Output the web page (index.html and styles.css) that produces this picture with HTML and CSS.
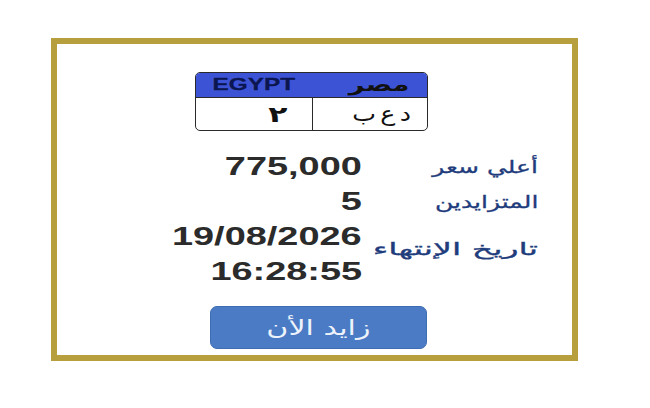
FILE: index.html
```html
<!DOCTYPE html>
<html lang="ar">
<head>
<meta charset="utf-8">
<link rel="stylesheet" href="styles.css">
</head>
<body>
<div class="card">
  <div class="plate">
    <div class="plate-head">
      <span class="cell egypt"><span class="sx">EGYPT</span></span>
      <span class="cell masr"><span class="sx">مصر</span></span>
    </div>
    <div class="plate-body">
      <span class="cell num"><span class="sx">٢</span></span>
      <span class="cell letters"><span class="sx">د ع ب</span></span>
    </div>
  </div>
  <div class="info">
    <div class="val"><span class="sx">775,000</span></div>
    <div class="lbl"><span class="sx">أعلي سعر</span></div>
    <div class="val"><span class="sx">5</span></div>
    <div class="lbl"><span class="sx">المتزايدين</span></div>
    <div class="val"><span class="sx">19/08/2026</span><br><span class="sx">16:28:55</span></div>
    <div class="lbl lbl-end"><span class="sx wide">تاريخ الإنتهاء</span></div>
  </div>
  <div class="btn"><span class="sx">زايد الأن</span></div>
</div>
</body>
</html>
```
FILE: styles.css
```css
html, body { margin: 0; padding: 0; background: #ffffff; }
body { padding: 38px 0 0 51px; font-family: "Liberation Sans", Arial, sans-serif; }

.card {
  width: 515px;
  height: 283px;
  border: 6px solid #b79f3d;
  display: flex;
  flex-direction: column;
  align-items: flex-start;
  padding-top: 28px;
  box-sizing: content-box;
}

.sx { display: inline-block; transform: scaleX(1.43); transform-origin: center; white-space: nowrap; }

.plate {
  margin-left: 138px;
  width: 231px;
  height: 57px;
  border: 1.5px solid #2a2a2a;
  border-radius: 5px;
  overflow: hidden;
  display: flex;
  flex-direction: column;
}
.plate-head {
  height: 24px;
  background: #3d53d6;
  border-bottom: 1px solid #2a2a2a;
  display: flex;
}
.plate-body { flex: 1; display: flex; }
.cell {
  width: 50%;
  min-width: 0;
  box-sizing: border-box;
  display: flex;
  align-items: center;
  justify-content: center;
}
.plate-body .cell + .cell { border-left: 1.5px solid #2a2a2a; }
.egypt { font-weight: bold; font-size: 17px; color: #0b1650; -webkit-text-stroke: 0.3px #0b1650; }
.masr { font-family: "DejaVu Sans", sans-serif; font-size: 19px; color: #111; font-weight: bold; justify-content: flex-end; padding-right: 18px; padding-bottom: 2px; }
.masr .sx { transform-origin: right center; }
.num { font-family: "DejaVu Sans", sans-serif; font-size: 22px; color: #111; font-weight: bold; justify-content: flex-end; padding-right: 24px; }
.num .sx { transform-origin: right center; }
.letters { font-family: "DejaVu Sans", sans-serif; font-size: 21px; color: #111; justify-content: flex-end; padding-right: 16px; word-spacing: -3px; }
.letters .sx { transform: scaleX(1.2); transform-origin: right center; }

.info {
  margin-top: 18px;
  margin-left: 105px;
  display: grid;
  grid-template-columns: 200px 165px;
  column-gap: 11px;
}
.val {
  text-align: right;
  font-weight: bold;
  font-size: 26.5px;
  line-height: 35px;
  color: #2b2b2b;
}
.val .sx { transform-origin: right center; }
.lbl {
  font-family: "DejaVu Sans", sans-serif;
  font-size: 17.5px;
  color: #1f3c7c;
  display: flex;
  align-items: center;
  justify-content: flex-end;
  -webkit-text-stroke: 0.3px #1f3c7c;
}
.lbl .sx { transform-origin: right center; }
.lbl .wide { transform: scaleX(1.9); }
.lbl-end { align-items: flex-start; padding-top: 20px; }

.btn {
  margin-top: 17px;
  margin-left: 153px;
  width: 217px;
  height: 43px;
  background: #4a7bc4;
  border: 1px solid #3f6db3;
  box-sizing: border-box;
  border-radius: 7px;
  display: flex;
  align-items: center;
  justify-content: center;
  font-family: "DejaVu Sans", sans-serif;
  font-size: 21px;
  color: #eef3fb;
}
```
